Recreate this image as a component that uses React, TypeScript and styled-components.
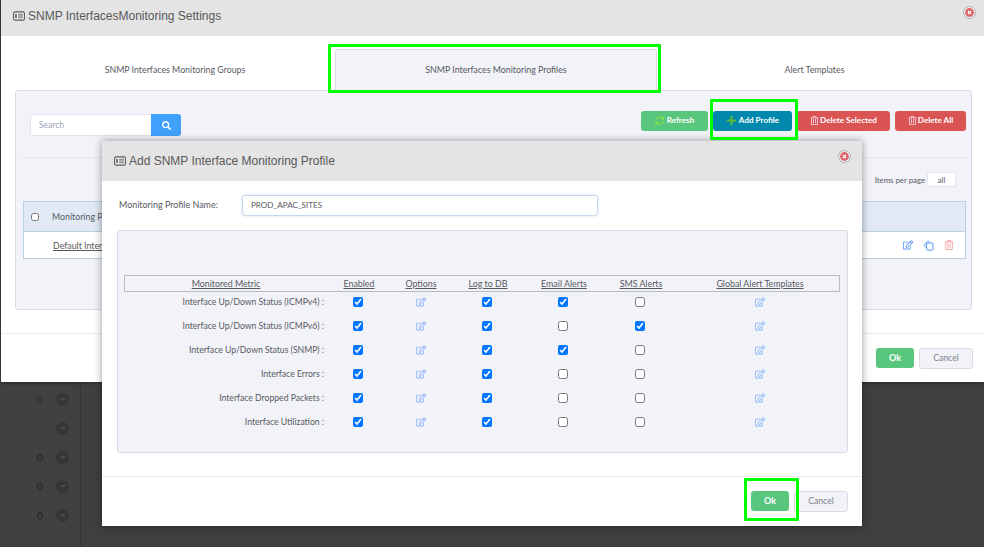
import React from "react";
import styled, { createGlobalStyle } from "styled-components";
import { FaRegEdit, FaRegTrashAlt, FaSearch, FaPlus, FaSyncAlt } from "react-icons/fa";

const Global = createGlobalStyle`
  html, body { margin: 0; padding: 0; background: #3f3f3f; }
  * { box-sizing: border-box; }
`;

const UI_FONT = `"Lato", "Liberation Sans", sans-serif`;

const Page = styled.div`
  position: relative;
  width: 984px;
  height: 547px;
  overflow: hidden;
  background: #3f3f3f;
  font-family: ${UI_FONT};
  font-size: 8.8px;
  color: #575962;
`;

const OuterModal = styled.section`
  margin-left: 1px;
  height: 382px;
  background: #fff;
  box-shadow: 0 1px 3px rgba(0, 0, 0, 0.4);
`;

const ModalHeader = styled.header<{ $height: number; $left: number; $right: number; $lift: number }>`
  height: ${(p) => p.$height}px;
  padding: 0 ${(p) => p.$right}px ${(p) => p.$lift}px ${(p) => p.$left}px;
  display: flex;
  align-items: center;
  justify-content: space-between;
  background: #e4e4e4;
`;

const ModalTitle = styled.h2`
  margin: 0;
  display: flex;
  align-items: center;
  gap: 3px;
  font-family: "Liberation Sans", Arial, sans-serif;
  font-size: 12px;
  font-weight: 400;
  color: #585858;
`;

const CloseGlyph = styled.svg`
  width: 13px;
  height: 13px;
  margin-bottom: 8px;
`;

const Tabs = styled.nav`
  height: 54px;
  padding-left: 14px;
  display: grid;
  grid-template-columns: 320px 322px 315px;
  align-items: end;
`;

const Tab = styled.div<{ $active?: boolean }>`
  height: 41px;
  display: flex;
  align-items: center;
  justify-content: center;
  padding-bottom: 2px;
  border-radius: 3px 3px 0 0;
  background: ${(p) => (p.$active ? "#f2f3f8" : "transparent")};
  border: 1px solid ${(p) => (p.$active ? "#d8dbe6" : "transparent")};
  border-bottom: 0;
`;

const Panel = styled.div`
  margin: 0 12px 0 14px;
  height: 220px;
  padding: 20px 5px 0 7px;
  background: #f2f3f8;
  border: 1px solid #d8dbe6;
  border-radius: 3px;
`;

const Toolbar = styled.div`
  height: 47px;
  display: flex;
  justify-content: space-between;
  align-items: flex-start;
  border-bottom: 1px solid #e2e4ec;
`;

const SearchGroup = styled.div`
  margin: 3px 0 0 7px;
  display: flex;
  height: 22px;
`;

const SearchInput = styled.input`
  width: 121px;
  height: 22px;
  padding: 0 8px 1px;
  background: #fff;
  border: 1px solid #e2e5ec;
  border-right: 0;
  border-radius: 3px 0 0 3px;
  outline: none;
  font-family: ${UI_FONT};
  font-size: 8.5px;
  color: #575962;
  &::placeholder { color: #a2a5b9; }
`;

const SearchButton = styled.button`
  width: 30px;
  height: 22px;
  padding: 0;
  display: flex;
  align-items: center;
  justify-content: center;
  border: 0;
  border-radius: 0 3px 3px 0;
  background: #3fa1fb;
  color: #fff;
  font-size: 9px;
`;

const ToolbarActions = styled.div`
  display: flex;
  gap: 5px;
`;

const ActionButton = styled.button<{ $bg: string; $width: number }>`
  width: ${(p) => p.$width}px;
  height: 20px;
  padding: 0 0 2px;
  display: flex;
  align-items: center;
  justify-content: center;
  gap: 1px;
  border: 0;
  border-radius: 3px;
  background: ${(p) => p.$bg};
  color: #fff;
  font-family: ${UI_FONT};
  font-size: 8.1px;
  font-weight: 700;
`;

const RefreshGlyph = styled(FaSyncAlt)`
  color: #7fe04e;
  font-size: 9px;
  margin-right: 2px;
`;

const PlusGlyph = styled(FaPlus)`
  color: #5fb833;
  font-size: 11px;
  margin-right: 1px;
`;

const TrashGlyph = styled(FaRegTrashAlt)`
  color: #fbd9e4;
  font-size: 9px;
`;

const PerPageRow = styled.div`
  margin-top: 14px;
  height: 15px;
  padding-right: 10px;
  display: flex;
  justify-content: flex-end;
  align-items: center;
  gap: 2px;
  font-size: 7.8px;
`;

const PerPageValue = styled.div`
  width: 29px;
  height: 15px;
  display: flex;
  align-items: center;
  justify-content: center;
  background: #fff;
  border: 1px solid #e2e5ec;
  border-radius: 2px;
  font-size: 8px;
`;

const ListTable = styled.div`
  margin-top: 14px;
  width: 943px;
  border: 1px solid #b9cfe4;
  background: #fff;
`;

const ListHead = styled.div`
  height: 30px;
  padding-left: 7px;
  display: flex;
  align-items: center;
  gap: 13px;
  background: #e1eaf4;
  border-bottom: 1px solid #b9cfe4;
`;

const HeadCheck = styled.input`
  width: 8px;
  height: 8px;
  margin: 0;
`;

const ListRow = styled.div`
  height: 26px;
  padding: 0 11px 0 29px;
  display: flex;
  align-items: center;
  justify-content: space-between;
`;

const ProfileLink = styled.a`
  color: #575962;
  text-decoration: underline;
`;

const RowIcons = styled.div`
  display: flex;
  align-items: center;
  gap: 10px;
  font-size: 10px;
`;

const BlueIcon = styled.span`
  display: flex;
  color: #5b97f5;
`;

const PinkIcon = styled.span`
  display: flex;
  color: #f7a6aa;
`;

const FooterDivider = styled.div<{ $margin: number }>`
  margin-top: ${(p) => p.$margin}px;
  border-top: 1px solid #e9ebf1;
`;

const ModalFooter = styled.footer<{ $height: number; $pad: number }>`
  height: ${(p) => p.$height}px;
  padding-right: ${(p) => p.$pad}px;
  display: flex;
  justify-content: flex-end;
  align-items: center;
  gap: 5px;
`;

const OkButton = styled.button`
  width: 38px;
  height: 20px;
  padding: 0 0 2px;
  border: 0;
  border-radius: 3px;
  background: #58c67d;
  color: #fff;
  font-family: ${UI_FONT};
  font-size: 9px;
  font-weight: 700;
`;

const CancelButton = styled.button`
  width: 54px;
  height: 21px;
  padding: 0 0 2px;
  background: #f2f3f8;
  border: 1px solid #d8dbe6;
  border-radius: 3px;
  color: #7c7f8c;
  font-family: ${UI_FONT};
  font-size: 8.7px;
`;

const Backdrop = styled.div`
  height: 165px;
  padding-top: 3px;
  width: 81px;
  border-right: 1px solid #333;
`;

const BackRow = styled.div`
  width: 73px;
  height: 28px;
  margin-bottom: 1px;
  display: flex;
  align-items: center;
  justify-content: flex-end;
  padding-right: 4px;
  gap: 13px;
  background: #414141;
  color: #222;
  font-size: 10px;
`;

const BackCount = styled.span`
  width: 6px;
`;

const BackToggle = styled.span`
  width: 13px;
  height: 13px;
  border-radius: 50%;
  background: #363636;
  display: flex;
  align-items: center;
  justify-content: center;
  &::after {
    content: "";
    border-left: 3px solid transparent;
    border-right: 3px solid transparent;
    border-top: 3px solid #4c4c4c;
  }
`;

const InnerModal = styled.section`
  position: absolute;
  left: 102px;
  top: 141px;
  width: 760px;
  height: 385px;
  background: #fff;
  box-shadow: 0 0 8px rgba(0, 0, 0, 0.4);
`;

const NameRow = styled.div`
  padding: 14px 0 0 17px;
  height: 49px;
  display: flex;
  align-items: flex-start;
`;

const NameLabel = styled.label`
  width: 123px;
  line-height: 19px;
  font-size: 8.95px;
`;

const NameInput = styled.input`
  width: 356px;
  height: 21px;
  padding: 0 8px 1px;
  background: #fff;
  border: 1px solid #c7d9ef;
  border-radius: 3px;
  box-shadow: 0 0 3px rgba(120, 170, 230, 0.35);
  outline: none;
  font-family: ${UI_FONT};
  font-size: 8.1px;
  color: #575962;
`;

const MetricsPanel = styled.div`
  margin: 0 14px 0 15px;
  height: 223px;
  padding: 44px 7px 0 6px;
  background: #f2f3f8;
  border: 1px solid #d8dbe6;
  border-radius: 3px;
`;

const COLS = "202px 64px 60px 74px 78px 76px 162px";

const MetricsHead = styled.div`
  display: grid;
  grid-template-columns: ${COLS};
  height: 17px;
  margin-bottom: 0.5px;
  padding-bottom: 1px;
  border: 1px solid #b9bbc2;
  align-items: center;
  justify-items: center;
`;

const HeadLabel = styled.span`
  text-decoration: underline;
  font-size: 8.85px;
`;

const MetricRow = styled.div`
  display: grid;
  grid-template-columns: ${COLS};
  height: 18px;
  margin-bottom: 6px;
  align-items: center;
  justify-items: center;
`;

const MetricLabel = styled.span`
  justify-self: end;
  padding-right: 2px;
  font-size: 8.65px;
`;

const MetricCheck = styled.input`
  width: 10px;
  height: 10px;
  margin: 0;
`;

const EditIcon = styled(FaRegEdit)`
  color: #8ab4f5;
  font-size: 10px;
  margin-left: 1px;
`;

const Highlight = styled.div<{ $x: number; $y: number; $w: number; $h: number }>`
  position: absolute;
  left: ${(p) => p.$x}px;
  top: ${(p) => p.$y}px;
  width: ${(p) => p.$w}px;
  height: ${(p) => p.$h}px;
  border: 3px solid #00ff00;
  border-radius: 1px;
  pointer-events: none;
`;

const TitleIcon = () => (
  <svg width="12" height="10" viewBox="0 0 12 10" aria-hidden="true">
    <rect x="0.6" y="0.9" width="10.8" height="8.2" rx="1.4" fill="#fff" stroke="#555" strokeWidth="1.1" />
    <rect x="2.2" y="2.8" width="1.6" height="4.4" fill="#555" />
    <path d="M5 3.2h5M5 5h5M5 6.8h5" stroke="#555" strokeWidth="0.9" />
  </svg>
);

const CloseIcon = () => (
  <CloseGlyph viewBox="0 0 13 13" aria-hidden="true">
    <circle cx="6.5" cy="6.5" r="6" fill="#eee" stroke="#aaa" strokeWidth="0.9" />
    <circle cx="6.5" cy="6.5" r="4.4" fill="#dd6468" />
    <path d="M5 5l3 3M8 5l-3 3" stroke="#fff" strokeWidth="1.1" />
  </CloseGlyph>
);

const CopyIcon = () => (
  <svg width="11" height="11" viewBox="0 0 11 11" fill="none" aria-hidden="true">
    <path d="M3.4 7.6 1.6 6.2a1 1 0 0 1-.1-1.4L4.4 1.4a1 1 0 0 1 1.4-.1l1.2 1.2" stroke="currentColor" strokeWidth="1" />
    <rect x="3.6" y="3" width="6.4" height="7.2" rx="1" stroke="currentColor" strokeWidth="1" />
  </svg>
);

const metrics: [string, boolean, boolean, boolean, boolean][] = [
  ["Interface Up/Down Status (ICMPv4) :", true, true, true, false],
  ["Interface Up/Down Status (ICMPv6) :", true, true, false, true],
  ["Interface Up/Down Status (SNMP) :", true, true, true, false],
  ["Interface Errors :", true, true, false, false],
  ["Interface Dropped Packets :", true, true, false, false],
  ["Interface Utilization :", true, true, false, false],
];

const backRows = ["0", "", "0", "0", "0"];

export default function App() {
  return (
    <Page>
      <Global />
      <OuterModal>
        <ModalHeader $height={36} $left={12} $right={8} $lift={4}>
          <ModalTitle>
            <TitleIcon />
            SNMP InterfacesMonitoring Settings
          </ModalTitle>
          <CloseIcon />
        </ModalHeader>
        <Tabs>
          <Tab>SNMP Interfaces Monitoring Groups</Tab>
          <Tab $active>SNMP Interfaces Monitoring Profiles</Tab>
          <Tab>Alert Templates</Tab>
        </Tabs>
        <Panel>
          <Toolbar>
            <SearchGroup>
              <SearchInput placeholder="Search" />
              <SearchButton><FaSearch /></SearchButton>
            </SearchGroup>
            <ToolbarActions>
              <ActionButton $bg="#58c67d" $width={67}><RefreshGlyph />Refresh</ActionButton>
              <ActionButton $bg="#0089ad" $width={79}><PlusGlyph />Add Profile</ActionButton>
              <ActionButton $bg="#db5454" $width={93}><TrashGlyph />Delete Selected</ActionButton>
              <ActionButton $bg="#db5454" $width={71}><TrashGlyph />Delete All</ActionButton>
            </ToolbarActions>
          </Toolbar>
          <PerPageRow>
            Items per page
            <PerPageValue>all</PerPageValue>
          </PerPageRow>
          <ListTable>
            <ListHead>
              <HeadCheck type="checkbox" />
              Monitoring Profile Name
            </ListHead>
            <ListRow>
              <ProfileLink>Default Interfaces Monitoring Profile</ProfileLink>
              <RowIcons>
                <BlueIcon><FaRegEdit /></BlueIcon>
                <BlueIcon><CopyIcon /></BlueIcon>
                <PinkIcon><FaRegTrashAlt /></PinkIcon>
              </RowIcons>
            </ListRow>
          </ListTable>
        </Panel>
        <FooterDivider $margin={23} />
        <ModalFooter $height={48} $pad={11}>
          <OkButton>Ok</OkButton>
          <CancelButton>Cancel</CancelButton>
        </ModalFooter>
      </OuterModal>

      <Backdrop>
        {backRows.map((n, i) => (
          <BackRow key={i}>
            <BackCount>{n}</BackCount>
            <BackToggle />
          </BackRow>
        ))}
      </Backdrop>

      <InnerModal>
        <ModalHeader $height={40} $left={12} $right={11} $lift={1}>
          <ModalTitle>
            <TitleIcon />
            Add SNMP Interface Monitoring Profile
          </ModalTitle>
          <CloseIcon />
        </ModalHeader>
        <NameRow>
          <NameLabel>Monitoring Profile Name:</NameLabel>
          <NameInput defaultValue="PROD_APAC_SITES" />
        </NameRow>
        <MetricsPanel>
          <MetricsHead>
            <HeadLabel>Monitored Metric</HeadLabel>
            <HeadLabel>Enabled</HeadLabel>
            <HeadLabel>Options</HeadLabel>
            <HeadLabel>Log to DB</HeadLabel>
            <HeadLabel>Email Alerts</HeadLabel>
            <HeadLabel>SMS Alerts</HeadLabel>
            <HeadLabel>Global Alert Templates</HeadLabel>
          </MetricsHead>
          {metrics.map(([label, enabled, log, email, sms]) => (
            <MetricRow key={label}>
              <MetricLabel>{label}</MetricLabel>
              <MetricCheck type="checkbox" defaultChecked={enabled} />
              <EditIcon />
              <MetricCheck type="checkbox" defaultChecked={log} />
              <MetricCheck type="checkbox" defaultChecked={email} />
              <MetricCheck type="checkbox" defaultChecked={sms} />
              <EditIcon />
            </MetricRow>
          ))}
        </MetricsPanel>
        <FooterDivider $margin={23} />
        <ModalFooter $height={48} $pad={14}>
          <OkButton>Ok</OkButton>
          <CancelButton>Cancel</CancelButton>
        </ModalFooter>
      </InnerModal>

      <Highlight $x={328} $y={44} $w={333} $h={49} />
      <Highlight $x={710} $y={99} $w={88} $h={41} />
      <Highlight $x={744} $y={478} $w={55} $h={43} />
    </Page>
  );
}
